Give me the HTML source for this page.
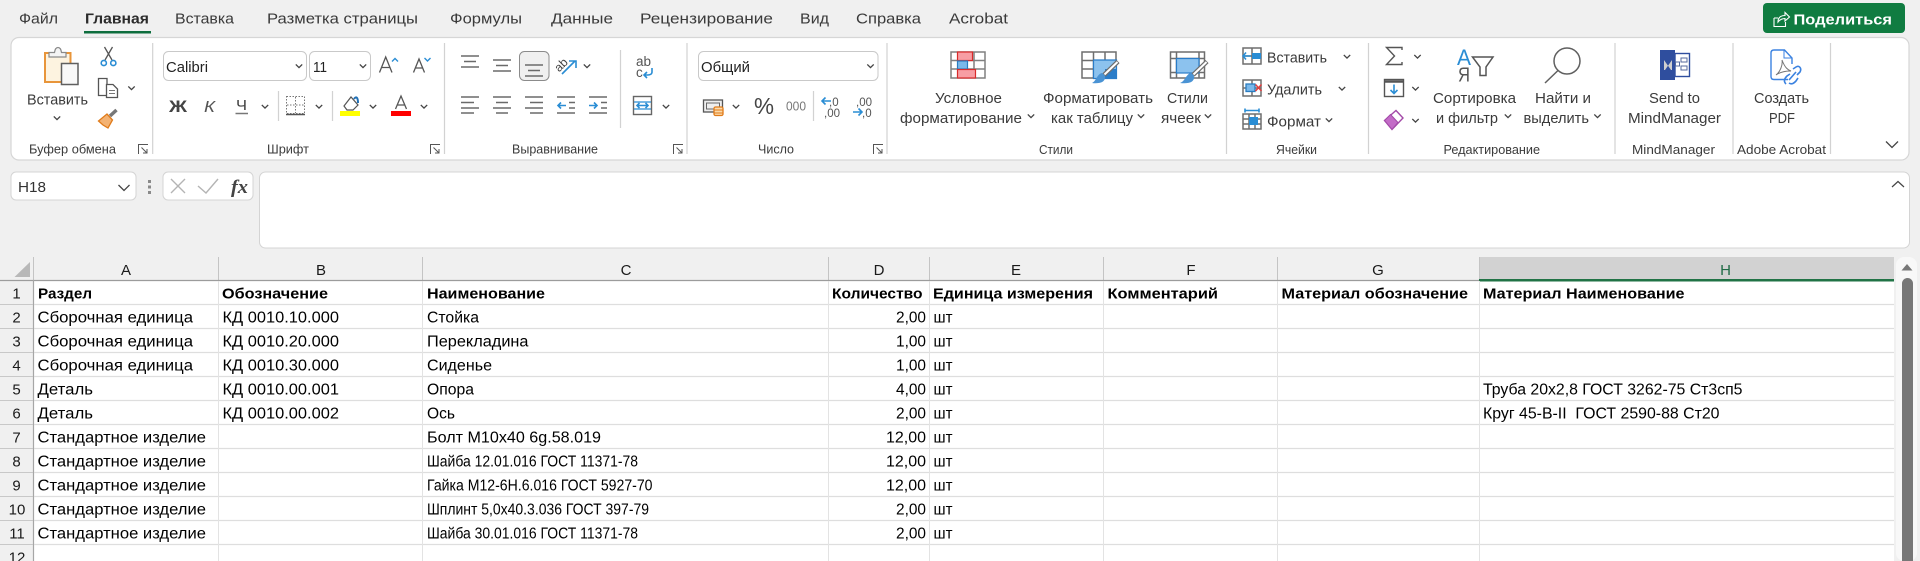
<!DOCTYPE html>
<html><head><meta charset="utf-8"><style>
html,body{margin:0;padding:0;background:#f0f0f0;width:1920px;height:561px;overflow:hidden}
svg{display:block}
text{font-family:"Liberation Sans",sans-serif;white-space:pre}
.tab{font-size:15px;fill:#3a3a3a}
.r{font-size:14.5px;fill:#3b3b3b}
.l{font-size:13px;fill:#3b3b3b}
.g{font-size:15.5px;fill:#000}
.b{font-size:15px;fill:#000;font-weight:bold}
.h{font-size:15px;fill:#1a1a1a;text-anchor:middle}
.n{font-size:15px;fill:#1a1a1a;text-anchor:middle}
.ln{stroke:#6a6a6a;stroke-width:1.5;fill:none}
.gr{stroke:#6e6e6e;stroke-width:1.5;fill:none}
.bl{stroke:#2a8dd4;stroke-width:1.6;fill:none}
</style></head><body>
<svg width="1920" height="561" viewBox="0 0 1920 561" xmlns="http://www.w3.org/2000/svg">
<defs>
<path id="c" d="M-3.2-1.6 0 1.6 3.2-1.6" fill="none" stroke="#444" stroke-width="1.3"/>
<g id="dl" fill="none" stroke="#555" stroke-width="1"><path d="M-4.5 5V-4.5H5"/><path d="M-1.5-1.5 4 4M4 0V4H0"/></g>
<g id="a1" class="ln"><path d="M-9 0H9M-6 5.5H6M-9 11H9"/></g>
<g id="lnL" class="ln"><path d="M-9 0H9M-9 5.5H4M-9 11H9M-9 16H4"/></g>
<g id="lnC" class="ln"><path d="M-9 0H9M-6 5.5H6M-9 11H9M-6 16H6"/></g>
<g id="lnR" class="ln"><path d="M-9 0H9M-4 5.5H9M-9 11H9M-4 16H9"/></g>
</defs>
<rect width="1920" height="561" fill="#f0f0f0"/>

<!-- tabs -->
<text class="tab" x="19" y="23.5" textLength="39" lengthAdjust="spacingAndGlyphs">Файл</text>
<text class="tab" x="85" y="23.5" textLength="64" lengthAdjust="spacingAndGlyphs" font-weight="bold" style="fill:#2b2b2b">Главная</text>
<rect x="84" y="31" width="67" height="2.5" fill="#0e6e3e"/>
<text class="tab" x="175" y="23.5" textLength="59" lengthAdjust="spacingAndGlyphs">Вставка</text>
<text class="tab" x="267" y="23.5" textLength="151" lengthAdjust="spacingAndGlyphs">Разметка страницы</text>
<text class="tab" x="450" y="23.5" textLength="72" lengthAdjust="spacingAndGlyphs">Формулы</text>
<text class="tab" x="551" y="23.5" textLength="62" lengthAdjust="spacingAndGlyphs">Данные</text>
<text class="tab" x="640" y="23.5" textLength="133" lengthAdjust="spacingAndGlyphs">Рецензирование</text>
<text class="tab" x="800" y="23.5" textLength="29" lengthAdjust="spacingAndGlyphs">Вид</text>
<text class="tab" x="856" y="23.5" textLength="65" lengthAdjust="spacingAndGlyphs">Справка</text>
<text class="tab" x="949" y="23.5" textLength="59" lengthAdjust="spacingAndGlyphs">Acrobat</text>

<!-- share -->
<rect x="1763" y="3" width="142" height="30" rx="4" fill="#107c41"/>
<path d="M1774 18V26.5H1785.5V22M1774 18H1778M1778 22C1778 17 1781 15.5 1785 15.5V12.5L1789.5 17 1785 21V18.5C1782 18.5 1780 19.5 1778 22Z" fill="none" stroke="#fff" stroke-width="1.1"/>
<text x="1793.5" y="24.5" font-size="15" font-weight="bold" fill="#fff" textLength="98.5" lengthAdjust="spacingAndGlyphs">Поделиться</text>

<!-- ribbon panel -->
<rect x="11" y="37.5" width="1898" height="122.5" rx="8" fill="#fff" stroke="#d6d6d6" stroke-width="1.2"/>
<g stroke="#d2d2d2" stroke-width="1.2">
<path d="M152.7 43V154M444.5 43V154M687 43V154M887 43V154M1226.5 43V154M1368.5 43V154M1615 43V154M1733 43V154M1830.5 43V154"/>
<path d="M278.5 91V121M332.5 91V121M620.5 50V128M813.5 91V121"/>
</g>

<!-- clipboard group -->
<rect x="45" y="53" width="25.5" height="29" fill="#fdf3e0" stroke="#e8953a" stroke-width="2"/>
<path d="M49 52.5H54.5C55 49 56 47.5 58 47.5S61 49 61.5 52.5H66V57H49Z" fill="#f4f4f4" stroke="#8a8a8a" stroke-width="1.2"/>
<rect x="61.5" y="63.5" width="16.5" height="21" fill="#f8f8f8" stroke="#5f5f5f" stroke-width="1.5"/>
<text class="r" x="27" y="104.5" textLength="61" lengthAdjust="spacingAndGlyphs">Вставить</text>
<use href="#c" x="57" y="118"/>
<path d="M104.5 47 112 60M112.5 47 105 60" stroke="#555" stroke-width="1.3" fill="none"/>
<circle cx="103.8" cy="63" r="2.6" class="bl"/><circle cx="113.3" cy="63" r="2.6" class="bl"/>
<path d="M106 95.5H98.5V78.5H107V84" fill="none" stroke="#555" stroke-width="1.3"/>
<path d="M106.5 84.5H113L117.5 89V97.5H106.5Z" fill="#fff" stroke="#555" stroke-width="1.3"/>
<path d="M109 90.5H115M109 93.5H115" stroke="#777"/>
<use href="#c" x="131.5" y="88"/>
<path d="M98.5 121 107 114 112.5 120 108 128 103 125Z" fill="#f3b273" stroke="#e07b1a" stroke-width="1.3"/>
<path d="M110 116 116.5 110" stroke="#777" stroke-width="3.5"/>
<text class="l" x="29" y="153.5" textLength="87" lengthAdjust="spacingAndGlyphs">Буфер обмена</text>
<use href="#dl" x="143" y="149"/>

<!-- font group -->
<rect x="163.5" y="51.5" width="143" height="29" rx="5" fill="#fff" stroke="#c9c9c9"/>
<rect x="309.5" y="51.5" width="61" height="29" rx="5" fill="#fff" stroke="#c9c9c9"/>
<text class="r" x="166" y="72" textLength="42" lengthAdjust="spacingAndGlyphs" style="fill:#222">Calibri</text>
<text class="r" x="313" y="72" textLength="14" lengthAdjust="spacingAndGlyphs" style="fill:#222">11</text>
<use href="#c" x="299" y="66"/><use href="#c" x="363" y="66"/>
<path d="M379.5 72.5 385.7 57 392 72.5M381.5 67.5H390" fill="none" stroke="#555" stroke-width="1.3"/>
<path d="M392 61.5 395 58.5 398 61.5" fill="none" stroke="#2a8dd4" stroke-width="1.4"/>
<path d="M413.5 72.5 419 59 424.500 72.5M415.5 68H422.5" fill="none" stroke="#555" stroke-width="1.3"/>
<path d="M424.5 58 427.5 61 430.5 58" fill="none" stroke="#2a8dd4" stroke-width="1.4"/>
<text x="169" y="112" font-size="17" font-weight="bold" fill="#444" textLength="18" lengthAdjust="spacingAndGlyphs">Ж</text>
<text x="204" y="112" font-size="16" font-style="italic" fill="#555" textLength="11" lengthAdjust="spacingAndGlyphs">К</text>
<text x="236" y="110" font-size="15" fill="#444" textLength="11" lengthAdjust="spacingAndGlyphs">Ч</text>
<path d="M235.5 113.5H248" stroke="#777" stroke-width="1.5"/>
<use href="#c" x="265" y="106.5"/>
<path d="M286.5 96.5H304.5V113.5H286.5ZM295.5 97V113M287 105H304" fill="none" stroke="#777" stroke-dasharray="1.5 1.5"/>
<path d="M286 114.5H305" stroke="#555" stroke-width="1.5"/>
<use href="#c" x="319" y="106.5"/>
<path d="M344 106 351 97 358 105 353 110H347Z" fill="#fff" stroke="#555" stroke-width="1.2"/>
<path d="M354 99C356 96 358 97 358 103" stroke="#1f6fb5" stroke-width="2" fill="none"/>
<rect x="340" y="111" width="20" height="5" fill="#ffff00"/>
<use href="#c" x="373" y="106.5"/>
<path d="M395.5 109 401 96 406.5 109M397.5 105H404.5" fill="none" stroke="#555" stroke-width="1.3"/>
<rect x="391" y="111" width="20" height="5" fill="#f00"/>
<use href="#c" x="424" y="106.5"/>
<text class="l" x="267" y="153.5" textLength="42" lengthAdjust="spacingAndGlyphs">Шрифт</text>
<use href="#dl" x="435" y="149"/>

<!-- alignment group -->
<rect x="519.5" y="51.5" width="29.5" height="29" rx="5" fill="#f0f0f0" stroke="#8b8b8b"/>
<use href="#a1" x="470" y="56"/>
<use href="#a1" x="502" y="60"/>
<use href="#a1" x="534" y="65"/>
<text x="554" y="68" font-size="12" fill="#444" transform="rotate(-45 562 64)">ab</text>
<path d="M562 74 575 61M569 61H576V68" class="bl"/>
<use href="#c" x="587" y="66"/>
<use href="#lnL" x="470" y="97"/><use href="#lnC" x="502" y="97"/><use href="#lnR" x="534" y="97"/>
<path d="M569 102.5H575M569 108H575M557 97H575M557 113H575" class="ln"/>
<path d="M566 105.5H558M561 102.5 558 105.5 561 108.5" class="bl"/>
<path d="M601 102.5H607M601 108H607M589 97H607M589 113H607" class="ln"/>
<path d="M589 105.5H597M594 102.5 597 105.5 594 108.5" class="bl"/>
<text x="636" y="66" font-size="13.5" fill="#555">ab</text>
<text x="636" y="77" font-size="13.5" fill="#555">c</text>
<path d="M652 68V72C652 74 650 75 648 75H644M647 72 644 75 647 78" class="bl"/>
<use href="#c" x="666" y="106.5"/>
<rect x="633.5" y="96.5" width="18" height="18" fill="#fff" stroke="#666" stroke-width="1.4"/>
<path d="M634 102H651M634 109H651" stroke="#2a8dd4" stroke-width="1.3"/>
<path d="M637 105.5H648M639.5 103 637 105.5 639.5 108M645.5 103 648 105.5 645.5 108" class="bl" stroke-width="1.2"/>
<text class="l" x="512" y="153.5" textLength="86" lengthAdjust="spacingAndGlyphs">Выравнивание</text>
<use href="#dl" x="678" y="149"/>

<!-- number group -->
<rect x="698.5" y="51.5" width="179.5" height="29" rx="5" fill="#fff" stroke="#c9c9c9"/>
<text class="r" x="701" y="72" textLength="49" lengthAdjust="spacingAndGlyphs" style="fill:#222">Общий</text>
<use href="#c" x="870.5" y="66"/>
<rect x="703.5" y="100" width="19" height="12" fill="#eee" stroke="#555" stroke-width="1.3"/>
<rect x="706.5" y="103" width="13" height="6" fill="none" stroke="#666"/>
<rect x="714" y="107" width="9" height="8.5" rx="1.5" fill="#fbd9a8" stroke="#e07b1a" stroke-width="1.3"/>
<path d="M714 110H723M714 113H723" stroke="#e07b1a"/>
<use href="#c" x="736" y="106.5"/>
<text x="754" y="114" font-size="23" fill="#444" textLength="20" lengthAdjust="spacingAndGlyphs">%</text>
<text x="786" y="110.5" font-size="13" fill="#777" textLength="20" lengthAdjust="spacingAndGlyphs">000</text>
<path d="M831 101H822M825.5 97.5 822 101 825.5 104.5" class="bl"/>
<text x="829" y="106" font-size="11.5" fill="#555">,0</text>
<text x="824" y="117" font-size="11.5" fill="#555">,00</text>
<text x="856" y="106" font-size="11.5" fill="#555">,00</text>
<path d="M853 112H862M858.5 108.5 862 112 858.5 115.5" class="bl"/>
<text x="862" y="117" font-size="11.5" fill="#555">,0</text>
<text class="l" x="758" y="153.5" textLength="36" lengthAdjust="spacingAndGlyphs">Число</text>
<use href="#dl" x="878" y="149"/>

<!-- styles group -->
<rect x="951" y="52" width="34" height="26" fill="#fff"/>
<path d="M951 52H985V78H951ZM963 52V78M974 52V78M951 60.5H985M951 69H985" class="gr" style="stroke:#808080"/>
<rect x="957.5" y="52" width="15" height="8.5" fill="#f79ea4" stroke="#d92b2b" stroke-width="1.2"/>
<rect x="957.5" y="61" width="10" height="8" fill="#7ab8ea" stroke="#2a7cc0" stroke-width="1.2"/>
<rect x="957.5" y="69.5" width="18" height="8.5" fill="#f79ea4" stroke="#d92b2b" stroke-width="1.2"/>
<text class="r" x="935" y="103" textLength="67" lengthAdjust="spacingAndGlyphs">Условное</text>
<text class="r" x="900" y="123" textLength="122" lengthAdjust="spacingAndGlyphs">форматирование</text>
<use href="#c" x="1031" y="116"/>

<path d="M1082 52H1116V78H1082ZM1093.5 52V78M1105 52V78M1082 60.5H1116M1082 69H1116" class="gr"/>
<rect x="1093.5" y="60" width="23" height="18.5" fill="#8cc2ee"/>
<path d="M1105 69H1116.5V78.5H1105Z" fill="#2a7cc8"/><path d="M1093.5 60H1116.5V78.5H1093.5Z" fill="none" stroke="#2a7cc8" stroke-width="1.2"/>
<path d="M1118 61.5 1104 75" stroke="#6e6e6e" stroke-width="4.5"/><path d="M1117.5 62 1104.5 74.5" stroke="#fff" stroke-width="2"/>
<path d="M1102 73C1106 75 1106 79 1103 81.5C1100 83.5 1095 83.5 1092 83C1096 81.5 1097 74 1102 73Z" fill="#4a93d4"/>
<text class="r" x="1043" y="103" textLength="110" lengthAdjust="spacingAndGlyphs">Форматировать</text>
<text class="r" x="1051" y="123" textLength="82" lengthAdjust="spacingAndGlyphs">как таблицу</text>
<use href="#c" x="1141" y="116"/>

<path d="M1170.5 52H1204.5V78H1170.5ZM1176.5 52V78M1199 52V78M1170.5 58.5H1204.5M1170.5 72.5H1204.5" class="gr"/>
<rect x="1176.5" y="58.5" width="22.5" height="14.5" fill="#8cc2ee" stroke="#2a7cc8" stroke-width="1.2"/>
<path d="M1207 61.5 1193 75" stroke="#6e6e6e" stroke-width="4.5"/><path d="M1206.5 62 1193.5 74.5" stroke="#fff" stroke-width="2"/>
<path d="M1191 73C1195 75 1195 79 1192 81.5C1189 83.5 1184 83.5 1180 83C1185 81.5 1186 74 1191 73Z" fill="#4a93d4"/>
<text class="r" x="1167" y="103" textLength="41" lengthAdjust="spacingAndGlyphs">Стили</text>
<text class="r" x="1161" y="123" textLength="40" lengthAdjust="spacingAndGlyphs">ячеек</text>
<use href="#c" x="1208" y="116"/>
<text class="l" x="1039" y="154" textLength="34" lengthAdjust="spacingAndGlyphs">Стили</text>

<!-- cells group -->
<path d="M1243 48H1261V64H1243ZM1252 48V64M1243 56H1261" class="gr"/><rect x="1252" y="53" width="9" height="6" fill="#2a8dd4"/>
<path d="M1251 56H1243M1246 52.5 1243 56 1246 59.5" fill="none" stroke="#2a8dd4" stroke-width="1.6"/>
<text class="r" x="1267" y="62.5" textLength="60" lengthAdjust="spacingAndGlyphs">Вставить</text><use href="#c" x="1347" y="56.5"/>
<path d="M1243 80H1261V96H1243ZM1252 80V96M1243 88H1261" class="gr"/><rect x="1246" y="84" width="9" height="7.5" fill="#7ab8ea" stroke="#2a7cc0" stroke-width="1.3"/>
<path d="M1255.5 84.5 1261.5 91M1261.5 84.5 1255.5 91" stroke="#e04040" stroke-width="1.5"/>
<text class="r" x="1267" y="94.5" textLength="55" lengthAdjust="spacingAndGlyphs">Удалить</text><use href="#c" x="1342" y="88.5"/>
<path d="M1243 114H1261V129H1243ZM1249 114V129M1255 114V129M1243 119H1261M1243 124H1261" class="gr"/><rect x="1249" y="117" width="9" height="8" fill="#2a8dd4"/>
<path d="M1245 110.5H1259M1245 108.5V112.5M1259 108.5V112.5" class="bl" stroke-width="1.2"/>
<text class="r" x="1267" y="126.5" textLength="54" lengthAdjust="spacingAndGlyphs">Формат</text><use href="#c" x="1329" y="120"/>
<text class="l" x="1276" y="154" textLength="41" lengthAdjust="spacingAndGlyphs">Ячейки</text>

<!-- edit group -->
<path d="M1402 50V47.5H1386.5L1394.5 56 1386.5 64.5H1402V62" fill="none" stroke="#555" stroke-width="1.4"/>
<use href="#c" x="1417.5" y="56.5"/>
<rect x="1384.5" y="79.5" width="19" height="17" fill="#fff" stroke="#555" stroke-width="1.4"/><path d="M1384.5 81.5H1403.5" stroke="#555" stroke-width="2.5"/>
<path d="M1394 84.5V93.5M1390.5 90 1394 93.5 1397.5 90" class="bl"/>
<use href="#c" x="1415.5" y="88.5"/>
<path d="M1384.5 120.5 1396 110.5 1403 118 1392 129.5Z" fill="#fff" stroke="#a34aa8" stroke-width="1.4"/><path d="M1384.5 120.5 1390.5 114.5 1398 122.5 1392 129.5Z" fill="#c36cc7" stroke="#a34aa8"/>
<use href="#c" x="1415.5" y="120.5"/>

<text x="1457" y="65" font-size="22" fill="#2a8dd4" textLength="14" lengthAdjust="spacingAndGlyphs">А</text>
<text x="1458" y="81.5" font-size="20" fill="#555" textLength="12" lengthAdjust="spacingAndGlyphs">Я</text>
<path d="M1472.5 57H1493L1486 67V75.5L1480 75.5V67Z" fill="#fff" stroke="#555" stroke-width="1.5"/>
<text class="r" x="1433" y="103" textLength="83" lengthAdjust="spacingAndGlyphs">Сортировка</text>
<text class="r" x="1436" y="123" textLength="62" lengthAdjust="spacingAndGlyphs">и фильтр</text><use href="#c" x="1508" y="116"/>

<circle cx="1567" cy="61" r="13" fill="#fff" stroke="#606060" stroke-width="1.5"/>
<path d="M1558 70.5 1545 83" stroke="#606060" stroke-width="1.5"/>
<text class="r" x="1535" y="103" textLength="56" lengthAdjust="spacingAndGlyphs">Найти и</text>
<text class="r" x="1523.5" y="123" textLength="65.5" lengthAdjust="spacingAndGlyphs">выделить</text><use href="#c" x="1597.5" y="116"/>
<text class="l" x="1443.5" y="154" textLength="96.5" lengthAdjust="spacingAndGlyphs">Редактирование</text>

<!-- mindmanager -->
<rect x="1675" y="53.5" width="14.5" height="23" fill="#fff" stroke="#2f4e9e" stroke-width="1.4"/>
<rect x="1660" y="50" width="15" height="30" fill="#2f4e9e"/>
<path d="M1664 60 1671 70H1672V60L1665 70H1664Z" fill="#cfcfcf"/>
<rect x="1681" y="58" width="6" height="4" fill="none" stroke="#556a9e"/><rect x="1681" y="66" width="6" height="4" fill="none" stroke="#556a9e"/><rect x="1675.5" y="62" width="4" height="4" fill="none" stroke="#556a9e"/>
<text class="r" x="1649" y="103" textLength="51" lengthAdjust="spacingAndGlyphs">Send to</text>
<text class="r" x="1628" y="123" textLength="93" lengthAdjust="spacingAndGlyphs">MindManager</text>
<text class="l" x="1632" y="154" textLength="83" lengthAdjust="spacingAndGlyphs">MindManager</text>

<!-- acrobat -->
<path d="M1788 79.5H1774C1772 79.5 1771 78.5 1771 76.5V53C1771 51 1772 50 1774 50H1784.5L1792 58V64" fill="none" stroke="#3b82e0" stroke-width="1.4"/>
<path d="M1784 50V58H1792" fill="none" stroke="#3b82e0" stroke-width="1"/>
<path d="M1776 75C1780 72 1783 65 1782 60C1785 68 1788 70 1791 71C1786 71 1780 72 1776 75Z" fill="none" stroke="#777" stroke-width="1"/>
<path d="M1789 80 1796 72M1786 84C1783 81 1785 78 1787 76L1790 74M1793 69 1796 67C1799 65 1802 68 1800 72L1797 75M1789 83C1792 85 1794 83 1796 81L1798 78" fill="none" stroke="#3b82e0" stroke-width="1.6"/>
<text class="r" x="1754" y="103" textLength="55" lengthAdjust="spacingAndGlyphs">Создать</text>
<text class="r" x="1769" y="123" textLength="26" lengthAdjust="spacingAndGlyphs">PDF</text>
<text class="l" x="1737" y="154" textLength="89" lengthAdjust="spacingAndGlyphs">Adobe Acrobat</text>
<path d="M1886 141.5 1892 147.5 1898 141.5" fill="none" stroke="#444" stroke-width="1.3"/>

<!-- formula bar -->
<rect x="11" y="172" width="125" height="28" rx="5" fill="#fff" stroke="#d4d4d4"/>
<text x="18" y="192" font-size="14.5" fill="#333" textLength="28" lengthAdjust="spacingAndGlyphs">H18</text>
<path d="M118.5 185 124 190.5 129.5 185" fill="none" stroke="#444" stroke-width="1.3"/>
<path d="M149.5 180V183M149.5 185.5V188.5M149.5 191V194" stroke="#8a8a8a" stroke-width="3"/>
<rect x="163" y="172" width="90" height="28" rx="5" fill="#fff" stroke="#d4d4d4"/>
<path d="M171 179 185 193M185 179 171 193" stroke="#b4b4b4" stroke-width="1.4"/>
<path d="M198 186 206 193 218 179" fill="none" stroke="#b4b4b4" stroke-width="1.4"/>
<text x="231" y="193" font-style="italic" font-weight="bold" font-size="19" fill="#444" textLength="17" lengthAdjust="spacingAndGlyphs" style="font-family:'Liberation Serif',serif">fx</text>
<rect x="259.5" y="172" width="1650" height="76" rx="6" fill="#fff" stroke="#d4d4d4"/>
<path d="M1892 187 1898 181.5 1904 187" fill="none" stroke="#444" stroke-width="1.2"/>

<!-- headers -->
<rect x="1479" y="257" width="415" height="23" fill="#d2d2d2"/>
<rect x="1896" y="257" width="21" height="304" rx="8" fill="#f8f8f8"/>
<rect x="0" y="280" width="1894" height="281" fill="#fff"/>
<rect x="0" y="280" width="33" height="281" fill="#f0f0f0"/>
<path d="M14.5 277H30V262Z" fill="#b8b8b8"/>
<g stroke="#c4c4c4" stroke-width="1"><path d="M33.5 257V280M218.5 257V280M422.5 257V280M828.5 257V280M929.5 257V280M1103.5 257V280M1277.5 257V280M1479.5 257V280"/></g>
<path d="M0 280.5H1479" stroke="#9c9c9c" stroke-width="1.2"/>
<rect x="1479" y="279" width="415" height="2.5" fill="#217346"/>
<path d="M33.5 280V561" stroke="#a6a6a6" stroke-width="1.2"/>
<g stroke="#c8c8c8"><path d="M0 304.5H33M0 328.5H33M0 352.5H33M0 376.5H33M0 400.5H33M0 424.5H33M0 448.5H33M0 472.5H33M0 496.5H33M0 520.5H33M0 544.5H33"/></g>
<!-- grid lines -->
<g stroke="#dedede" stroke-width="1.2"><path d="M34 304.5H1894M34 328.5H1894M34 352.5H1894M34 376.5H1894M34 400.5H1894M34 424.5H1894M34 448.5H1894M34 472.5H1894M34 496.5H1894M34 520.5H1894M34 544.5H1894"/></g>
<g stroke="#e3e3e3" stroke-width="1"><path d="M218.5 281V561M422.5 281V561M828.5 281V561M929.5 281V561M1103.5 281V561M1277.5 281V561M1479.5 281V561"/></g>
<!-- scrollbar -->
<path d="M1907 264 1912.5 270.5H1901.5Z" fill="#777"/>
<rect x="1902" y="278" width="11" height="290" rx="5.5" fill="#777"/>

<text class="h" x="126" y="275">A</text><text class="h" x="321" y="275">B</text><text class="h" x="626" y="275">C</text><text class="h" x="879" y="275">D</text><text class="h" x="1016" y="275">E</text><text class="h" x="1191" y="275">F</text><text class="h" x="1378" y="275">G</text><text class="h" x="1725.5" y="275" style="fill:#1f6b45">H</text>

<g>
<text class="n" x="16.5" y="298.7">1</text><text class="n" x="16.5" y="322.7">2</text><text class="n" x="16.5" y="346.7">3</text><text class="n" x="16.5" y="370.7">4</text><text class="n" x="16.5" y="394.7">5</text><text class="n" x="16.5" y="418.7">6</text><text class="n" x="16.5" y="442.7">7</text><text class="n" x="16.5" y="466.7">8</text><text class="n" x="16.5" y="490.7">9</text><text class="n" x="17" y="514.7">10</text><text class="n" x="17" y="538.7">11</text><text class="n" x="17" y="562.7">12</text>
</g>

<g>
<text class="b" x="38" y="298.7" textLength="54" lengthAdjust="spacingAndGlyphs">Раздел</text>
<text class="b" x="222" y="298.7" textLength="106" lengthAdjust="spacingAndGlyphs">Обозначение</text>
<text class="b" x="427" y="298.7" textLength="118" lengthAdjust="spacingAndGlyphs">Наименование</text>
<text class="b" x="832" y="298.7" textLength="90.5" lengthAdjust="spacingAndGlyphs">Количество</text>
<text class="b" x="933" y="298.7" textLength="160" lengthAdjust="spacingAndGlyphs">Единица измерения</text>
<text class="b" x="1107.5" y="298.7" textLength="110.5" lengthAdjust="spacingAndGlyphs">Комментарий</text>
<text class="b" x="1281.5" y="298.7" textLength="186.5" lengthAdjust="spacingAndGlyphs">Материал обозначение</text>
<text class="b" x="1483" y="298.7" textLength="201.5" lengthAdjust="spacingAndGlyphs">Материал Наименование</text>

<text class="g" x="37.5" y="322.7" textLength="155.5" lengthAdjust="spacingAndGlyphs">Сборочная единица</text>
<text class="g" x="37.5" y="346.7" textLength="155.5" lengthAdjust="spacingAndGlyphs">Сборочная единица</text>
<text class="g" x="37.5" y="370.7" textLength="155.5" lengthAdjust="spacingAndGlyphs">Сборочная единица</text>
<text class="g" x="37.5" y="394.7" textLength="55.5" lengthAdjust="spacingAndGlyphs">Деталь</text>
<text class="g" x="37.5" y="418.7" textLength="55.5" lengthAdjust="spacingAndGlyphs">Деталь</text>
<text class="g" x="37.5" y="442.7" textLength="168.5" lengthAdjust="spacingAndGlyphs">Стандартное изделие</text>
<text class="g" x="37.5" y="466.7" textLength="168.5" lengthAdjust="spacingAndGlyphs">Стандартное изделие</text>
<text class="g" x="37.5" y="490.7" textLength="168.5" lengthAdjust="spacingAndGlyphs">Стандартное изделие</text>
<text class="g" x="37.5" y="514.7" textLength="168.5" lengthAdjust="spacingAndGlyphs">Стандартное изделие</text>
<text class="g" x="37.5" y="538.7" textLength="168.5" lengthAdjust="spacingAndGlyphs">Стандартное изделие</text>

<text class="g" x="222.5" y="322.7" textLength="116.5" lengthAdjust="spacingAndGlyphs">КД 0010.10.000</text>
<text class="g" x="222.5" y="346.7" textLength="116.5" lengthAdjust="spacingAndGlyphs">КД 0010.20.000</text>
<text class="g" x="222.5" y="370.7" textLength="116.5" lengthAdjust="spacingAndGlyphs">КД 0010.30.000</text>
<text class="g" x="222.5" y="394.7" textLength="116.5" lengthAdjust="spacingAndGlyphs">КД 0010.00.001</text>
<text class="g" x="222.5" y="418.7" textLength="116.5" lengthAdjust="spacingAndGlyphs">КД 0010.00.002</text>

<text class="g" x="427" y="322.7" textLength="52" lengthAdjust="spacingAndGlyphs">Стойка</text>
<text class="g" x="427" y="346.7" textLength="101.5" lengthAdjust="spacingAndGlyphs">Перекладина</text>
<text class="g" x="427" y="370.7" textLength="65" lengthAdjust="spacingAndGlyphs">Сиденье</text>
<text class="g" x="427" y="394.7" textLength="47" lengthAdjust="spacingAndGlyphs">Опора</text>
<text class="g" x="427" y="418.7" textLength="28" lengthAdjust="spacingAndGlyphs">Ось</text>
<text class="g" x="427" y="442.7" textLength="174" lengthAdjust="spacingAndGlyphs">Болт М10х40 6g.58.019</text>
<text class="g" x="427" y="466.7" textLength="211" lengthAdjust="spacingAndGlyphs">Шайба 12.01.016 ГОСТ 11371-78</text>
<text class="g" x="427" y="490.7" textLength="225.5" lengthAdjust="spacingAndGlyphs">Гайка М12-6Н.6.016 ГОСТ 5927-70</text>
<text class="g" x="427" y="514.7" textLength="222" lengthAdjust="spacingAndGlyphs">Шплинт 5,0х40.3.036 ГОСТ 397-79</text>
<text class="g" x="427" y="538.7" textLength="211" lengthAdjust="spacingAndGlyphs">Шайба 30.01.016 ГОСТ 11371-78</text>

<text class="g" x="896" y="322.7" textLength="30" lengthAdjust="spacingAndGlyphs">2,00</text>
<text class="g" x="896" y="346.7" textLength="30" lengthAdjust="spacingAndGlyphs">1,00</text>
<text class="g" x="896" y="370.7" textLength="30" lengthAdjust="spacingAndGlyphs">1,00</text>
<text class="g" x="896" y="394.7" textLength="30" lengthAdjust="spacingAndGlyphs">4,00</text>
<text class="g" x="896" y="418.7" textLength="30" lengthAdjust="spacingAndGlyphs">2,00</text>
<text class="g" x="886" y="442.7" textLength="40" lengthAdjust="spacingAndGlyphs">12,00</text>
<text class="g" x="886" y="466.7" textLength="40" lengthAdjust="spacingAndGlyphs">12,00</text>
<text class="g" x="886" y="490.7" textLength="40" lengthAdjust="spacingAndGlyphs">12,00</text>
<text class="g" x="896" y="514.7" textLength="30" lengthAdjust="spacingAndGlyphs">2,00</text>
<text class="g" x="896" y="538.7" textLength="30" lengthAdjust="spacingAndGlyphs">2,00</text>

<text class="g" x="933.5" y="322.7" textLength="19" lengthAdjust="spacingAndGlyphs">шт</text>
<text class="g" x="933.5" y="346.7" textLength="19" lengthAdjust="spacingAndGlyphs">шт</text>
<text class="g" x="933.5" y="370.7" textLength="19" lengthAdjust="spacingAndGlyphs">шт</text>
<text class="g" x="933.5" y="394.7" textLength="19" lengthAdjust="spacingAndGlyphs">шт</text>
<text class="g" x="933.5" y="418.7" textLength="19" lengthAdjust="spacingAndGlyphs">шт</text>
<text class="g" x="933.5" y="442.7" textLength="19" lengthAdjust="spacingAndGlyphs">шт</text>
<text class="g" x="933.5" y="466.7" textLength="19" lengthAdjust="spacingAndGlyphs">шт</text>
<text class="g" x="933.5" y="490.7" textLength="19" lengthAdjust="spacingAndGlyphs">шт</text>
<text class="g" x="933.5" y="514.7" textLength="19" lengthAdjust="spacingAndGlyphs">шт</text>
<text class="g" x="933.5" y="538.7" textLength="19" lengthAdjust="spacingAndGlyphs">шт</text>

<text class="g" x="1483" y="394.7" textLength="259.5" lengthAdjust="spacingAndGlyphs">Труба 20х2,8 ГОСТ 3262-75 Ст3сп5</text>
<text class="g" x="1483" y="418.7" textLength="236.5" lengthAdjust="spacingAndGlyphs">Круг 45-В-II&#160; ГОСТ 2590-88 Ст20</text>
</g>
</svg>
</body></html>
